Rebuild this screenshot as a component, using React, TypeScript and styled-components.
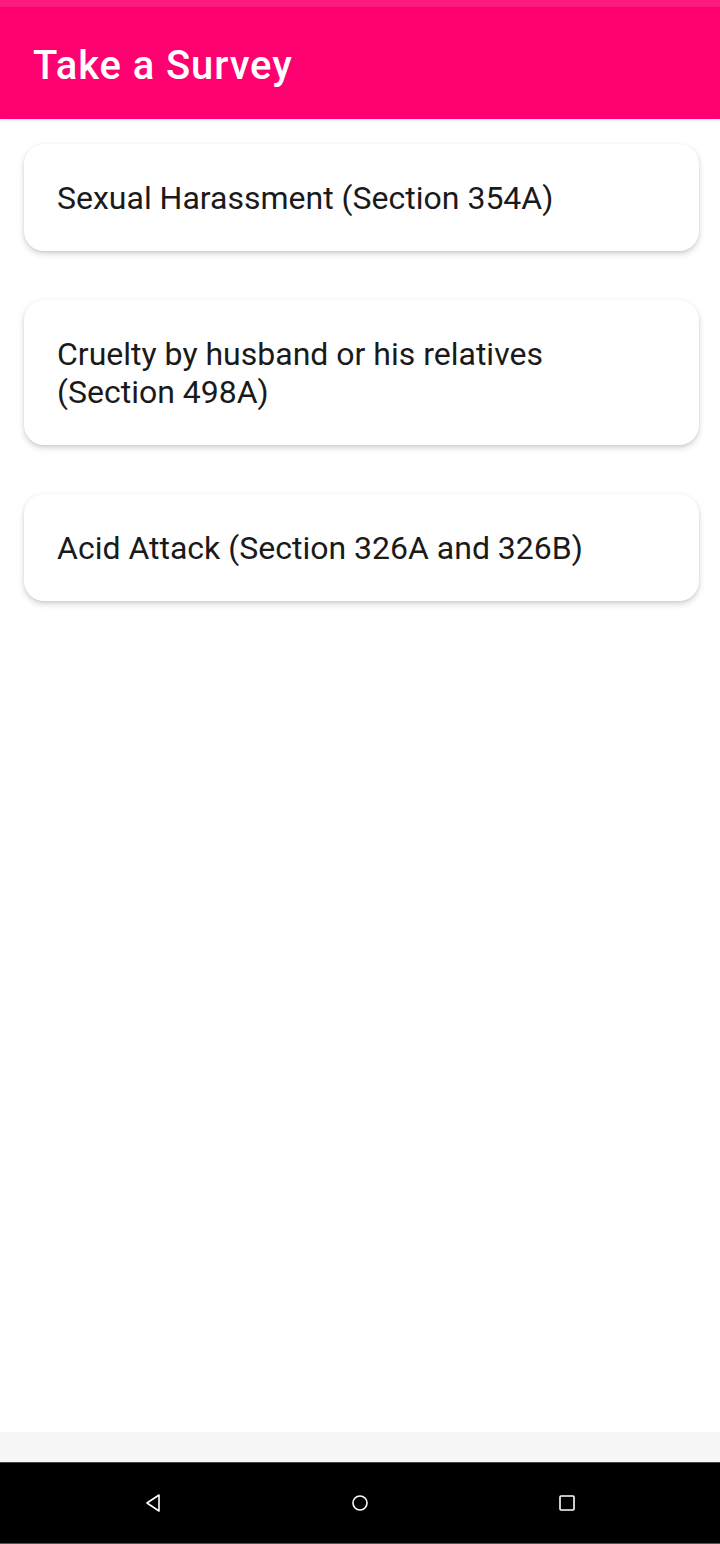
import React from "react";
import styled, { createGlobalStyle } from "styled-components";

const GlobalStyle = createGlobalStyle`
  html, body { margin: 0; padding: 0; background: #ffffff; }
  body { font-family: Roboto, "Noto Sans", Arial, sans-serif; }
`;

const Screen = styled.div`
  width: 720px;
  height: 1544px;
  display: flex;
  flex-direction: column;
  background: #ffffff;
  overflow: hidden;
`;

const StatusBar = styled.div`
  height: 7px;
  background: #ff1a80;
  flex: none;
`;

const AppBar = styled.header`
  height: 112px;
  background: #ff0070;
  display: flex;
  align-items: center;
  padding: 0 0 0 33px;
  flex: none;
  box-shadow: 0 1px 3px rgba(0, 0, 0, 0.12);
`;

const Title = styled.h1`
  margin: 0;
  color: #ffffff;
  font-family: Roboto, sans-serif;
  font-weight: 500;
  font-size: 40px;
  letter-spacing: 0.9px;
  padding-top: 4px;
`;

const List = styled.main`
  flex: 1;
  display: flex;
  flex-direction: column;
  gap: 49px;
  padding: 25px 21px 0 24px;
`;

const Card = styled.div`
  background: #ffffff;
  border-radius: 20px;
  padding: 35px 40px 34px 33px;
  box-shadow: 0 3px 6px rgba(0, 0, 0, 0.16), 0 1px 3px rgba(0, 0, 0, 0.08);
`;

const CardText = styled.p`
  margin: 0;
  font-family: Roboto, sans-serif;
  font-size: 32px;
  line-height: 38px;
  color: #1a1a1a;
`;

const BottomStrip = styled.div`
  height: 30px;
  background: #f7f7f7;
  flex: none;
`;

const NavBar = styled.nav`
  height: 80px;
  background: #000000;
  display: flex;
  align-items: center;
  justify-content: center;
  gap: 177px;
  flex: none;
  border-top: 1px solid #444;
`;

const NavButton = styled.div`
  width: 30px;
  height: 30px;
  display: flex;
  align-items: center;
  justify-content: center;
`;

const BottomEdge = styled.div`
  height: 1px;
  background: #555;
  flex: none;
`;

const items = [
  "Sexual Harassment (Section 354A)",
  "Cruelty by husband or his relatives (Section 498A)",
  "Acid Attack (Section 326A and 326B)",
];

export default function App() {
  return (
    <>
      <GlobalStyle />
      <Screen>
        <StatusBar />
        <AppBar>
          <Title>Take a Survey</Title>
        </AppBar>
        <List>
          {items.map((t) => (
            <Card key={t}>
              <CardText>{t}</CardText>
            </Card>
          ))}
        </List>
        <BottomStrip />
        <NavBar>
          <NavButton>
            <svg width="16" height="20" viewBox="0 0 16 20">
              <path d="M14 2 L2 10 L14 18 Z" fill="none" stroke="#fff" strokeWidth="1.6" strokeLinejoin="round" />
            </svg>
          </NavButton>
          <NavButton>
            <svg width="18" height="18" viewBox="0 0 18 18">
              <circle cx="9" cy="9" r="7" fill="none" stroke="#fff" strokeWidth="1.6" />
            </svg>
          </NavButton>
          <NavButton>
            <svg width="18" height="18" viewBox="0 0 18 18">
              <rect x="2" y="2" width="14" height="14" rx="1" fill="none" stroke="#fff" strokeWidth="1.6" />
            </svg>
          </NavButton>
        </NavBar>
        <BottomEdge />
      </Screen>
    </>
  );
}
